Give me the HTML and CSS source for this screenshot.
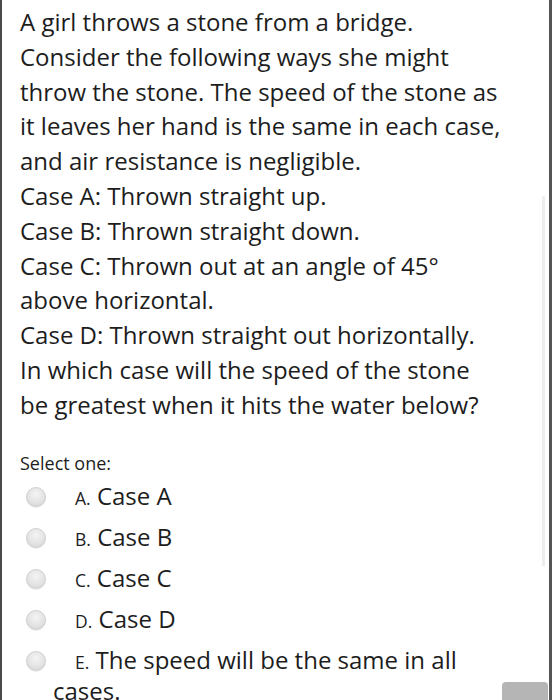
FILE: index.html
```html
<!DOCTYPE html>
<html>
<head>
<meta charset="utf-8">
<link rel="stylesheet" href="styles.css">
</head>
<body>
<div class="frame">
  <div class="content">
    <div class="qtext">
      <span class="line">A girl throws a stone from a bridge.</span>
      <span class="line">Consider the following ways she might</span>
      <span class="line">throw the stone. The speed of the stone as</span>
      <span class="line">it leaves her hand is the same in each case,</span>
      <span class="line">and air resistance is negligible.</span>
      <span class="line">Case A: Thrown straight up.</span>
      <span class="line">Case B: Thrown straight down.</span>
      <span class="line">Case C: Thrown out at an angle of 45°</span>
      <span class="line">above horizontal.</span>
      <span class="line">Case D: Thrown straight out horizontally.</span>
      <span class="line">In which case will the speed of the stone</span>
      <span class="line">be greatest when it hits the water below?</span>
    </div>
    <div class="prompt">Select one:</div>
    <div class="answers">
      <div class="opt"><span class="radio"></span><span class="lbl"><span class="num">A.</span> Case A</span></div>
      <div class="opt"><span class="radio"></span><span class="lbl"><span class="num">B.</span> Case B</span></div>
      <div class="opt"><span class="radio"></span><span class="lbl"><span class="num">C.</span> Case C</span></div>
      <div class="opt"><span class="radio"></span><span class="lbl"><span class="num">D.</span> Case D</span></div>
      <div class="opt last"><span class="radio"></span><span class="lbl"><span class="num">E.</span> The speed will be the same in all</span></div>
      <div class="wrapline">cases.</div>
    </div>
  </div>
  <div class="scroll"></div>
  <div class="btn"></div>
</div>
</body>
</html>
```
FILE: styles.css
```css
html, body {
  margin: 0;
  padding: 0;
  background: #fff;
}
body {
  width: 553px;
  height: 700px;
  overflow: hidden;
  font-family: "Open Sans", "Noto Sans", sans-serif;
  color: #1d1d1d;
}
.frame {
  position: relative;
  height: 700px;
  box-sizing: border-box;
  border-left: 2px solid #4a4a4a;
  border-right: 3px solid #555;
  margin-right: 1px;
}
.content {
  padding: 5px 0 0 18px;
}
.qtext {
  font-size: 24px;
  line-height: 34.8px;
}
.line {
  display: block;
  white-space: nowrap;
}
.prompt {
  margin-top: 27px;
  font-size: 18px;
  line-height: 26px;
}
.answers {
  margin-top: 1px;
}
.opt {
  display: flex;
  align-items: center;
  height: 41px;
}
.radio {
  width: 20px;
  height: 20px;
  border-radius: 50%;
  margin-left: 6px;
  box-sizing: border-box;
  border: 1px solid #d0d0d0;
  background: radial-gradient(circle at 50% 35%, #f4f4f4 0%, #e2e2e2 60%, #cfcfcf 100%);
  box-shadow: 0 1px 1px rgba(0,0,0,0.08);
}
.lbl {
  margin-left: 29px;
  font-size: 24px;
  line-height: 26px;
}
.num {
  font-size: 17.5px;
}
.wrapline {
  font-size: 24px;
  line-height: 22px;
  margin-left: 33px;
  margin-top: -2px;
}
.scroll {
  position: absolute;
  right: 4px;
  top: 196px;
  width: 3px;
  height: 370px;
  background: #eeeeee;
}
.btn {
  position: absolute;
  right: 1px;
  top: 682px;
  width: 46px;
  height: 24px;
  border-radius: 4px;
  background: #b5b5b5;
}
```
